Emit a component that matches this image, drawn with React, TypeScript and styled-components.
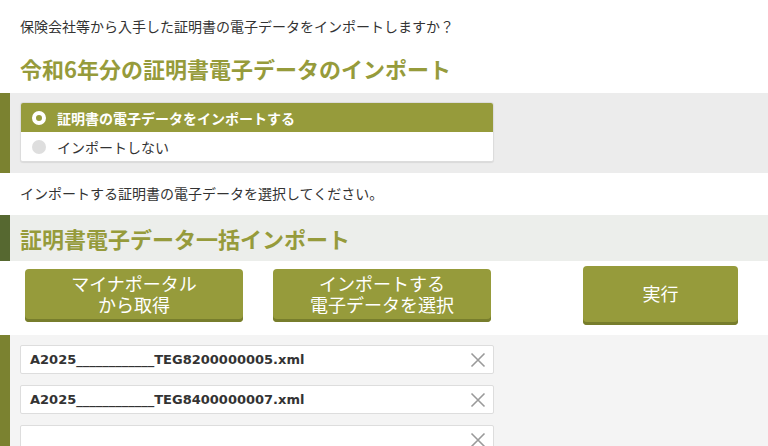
import React, { useState } from 'react';
import styled, { createGlobalStyle } from 'styled-components';

const OLIVE = '#969b3b';
const OLIVE_SHADOW = '#777d2c';
const TEXT = '#333333';
const JP_FONT = '"Noto Sans CJK JP", "DejaVu Sans", sans-serif';

const GlobalStyle = createGlobalStyle`
  html, body {
    margin: 0;
    padding: 0;
    background: #ffffff;
  }

  body {
    font-family: ${JP_FONT};
    color: ${TEXT};
    font-size: 14px;
  }
`;

const FILES = [
  'A2025____________TEG8200000005.xml',
  'A2025____________TEG8400000007.xml',
  '',
];

const CloseIcon: React.FC = () => (
  <svg width="16" height="16" viewBox="0 0 16 16" aria-hidden="true">
    <path d="M1.5 1.5 L14.5 14.5 M14.5 1.5 L1.5 14.5" stroke="#9a9a9a" strokeWidth="1.6" fill="none" />
  </svg>
);

interface RadioRowProps {
  label: string;
  selected: boolean;
  onSelect: () => void;
}

const RadioRow: React.FC<RadioRowProps> = ({ label, selected, onSelect }) => (
  <RadioItem $selected={selected} onClick={onSelect}>
    <RadioMark $selected={selected} />
    <span>{label}</span>
  </RadioItem>
);

export default function App() {
  const [doImport, setDoImport] = useState(true);

  return (
    <Page>
      <GlobalStyle />
      <Intro>保険会社等から入手した証明書の電子データをインポートしますか？</Intro>
      <PageTitle>令和6年分の証明書電子データのインポート</PageTitle>

      <GrayPanel>
        <RadioBox>
          <RadioRow label="証明書の電子データをインポートする" selected={doImport} onSelect={() => setDoImport(true)} />
          <RadioRow label="インポートしない" selected={!doImport} onSelect={() => setDoImport(false)} />
        </RadioBox>
      </GrayPanel>

      <Note>インポートする証明書の電子データを選択してください。</Note>

      <SectionBand>
        <SectionTitle>証明書電子データ一括インポート</SectionTitle>
      </SectionBand>

      <ButtonRow>
        <ActionButton>
          <ButtonLine>マイナポータル</ButtonLine>
          <ButtonLine>から取得</ButtonLine>
        </ActionButton>
        <ActionButton>
          <ButtonLine>インポートする</ButtonLine>
          <ButtonLine>電子データを選択</ButtonLine>
        </ActionButton>
        <RunButton>実行</RunButton>
      </ButtonRow>

      <FilePanel>
        {FILES.map((name, i) => (
          <FileRow key={i}>
            <FileName>{name}</FileName>
            <RemoveButton aria-label="削除"><CloseIcon /></RemoveButton>
          </FileRow>
        ))}
      </FilePanel>
    </Page>
  );
}

const Page = styled.div`
  width: 768px;
  height: 446px;
  overflow: hidden;
`;

const Intro = styled.p`
  margin: 0;
  padding: 16px 20px 0;
  font-size: 14px;
  line-height: 20px;
  color: ${TEXT};
`;

const PageTitle = styled.h2`
  margin: 17px 20px 10px;
  font-size: 22px;
  line-height: 30px;
  font-weight: 700;
  color: ${OLIVE};
`;

const GrayPanel = styled.div`
  background: #ececec;
  border-left: 10px solid #7b8230;
  padding: 9px 0 11px 10px;
`;

const RadioBox = styled.div`
  width: 472px;
  background: #ffffff;
  border: 1px solid #dcdcdc;
  border-radius: 3px;
  box-shadow: 0 1px 1px rgba(0, 0, 0, 0.08);
  overflow: hidden;
`;

const RadioItem = styled.div<{ $selected: boolean }>`
  display: flex;
  align-items: center;
  gap: 11px;
  height: 29px;
  padding-left: 11px;
  font-size: 14px;
  font-weight: ${p => (p.$selected ? 700 : 400)};
  color: ${p => (p.$selected ? '#ffffff' : TEXT)};
  background: ${p => (p.$selected ? OLIVE : '#ffffff')};
  cursor: pointer;
`;

const RadioMark = styled.span<{ $selected: boolean }>`
  width: 14px;
  height: 14px;
  border-radius: 50%;
  box-sizing: border-box;
  background: ${p => (p.$selected ? OLIVE : '#dedede')};
  border: ${p => (p.$selected ? '4px solid #ffffff' : 'none')};
  flex: none;
`;

const Note = styled.p`
  margin: 10px 20px 12px;
  font-size: 14px;
  line-height: 20px;
  color: ${TEXT};
`;

const SectionBand = styled.div`
  height: 46px;
  display: flex;
  align-items: center;
  background: #eceeeb;
  border-left: 10px solid #566830;
  padding-left: 10px;
`;

const SectionTitle = styled.h3`
  margin: 0;
  font-size: 22px;
  line-height: 30px;
  font-weight: 700;
  color: ${OLIVE};
`;

const ButtonRow = styled.div`
  height: 74px;
  box-sizing: border-box;
  display: flex;
  align-items: center;
  padding: 0 0 6px 25px;
`;

const ActionButton = styled.button`
  width: 218px;
  height: 53px;
  margin-right: 30px;
  display: flex;
  flex-direction: column;
  align-items: center;
  justify-content: center;
  border: none;
  border-radius: 4px;
  background: ${OLIVE};
  box-shadow: inset 0 -3px 0 ${OLIVE_SHADOW};
  padding: 0 0 3px;
  color: #ffffff;
  font-family: ${JP_FONT};
  font-size: 18px;
  line-height: 21px;
  cursor: pointer;
`;

const ButtonLine = styled.span`
  display: block;
  white-space: nowrap;
`;

const RunButton = styled(ActionButton)`
  width: 155px;
  height: 59px;
  margin: 0 0 0 62px;
`;

const FilePanel = styled.div`
  background: #f4f4f4;
  border-left: 10px solid #7b8230;
  padding: 10px 0 0 10px;
  display: flex;
  flex-direction: column;
  gap: 11px;
`;

const FileRow = styled.div`
  width: 474px;
  height: 29px;
  box-sizing: border-box;
  display: flex;
  align-items: center;
  background: #ffffff;
  border: 1px solid #dddddd;
  border-radius: 2px;
  padding: 0 7px 0 9px;
`;

const FileName = styled.span`
  flex: 1;
  font-family: "DejaVu Sans", ${JP_FONT};
  font-size: 13px;
  font-weight: 700;
  color: ${TEXT};
  white-space: nowrap;
`;

const RemoveButton = styled.button`
  display: flex;
  padding: 0;
  border: none;
  background: none;
  cursor: pointer;
`;
